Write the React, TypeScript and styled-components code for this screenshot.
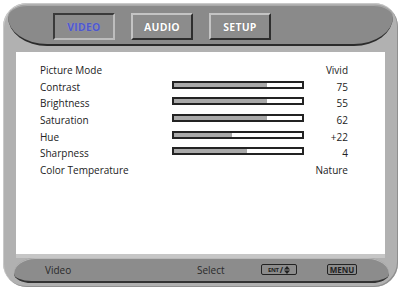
import React from 'react';
import styled, { createGlobalStyle } from 'styled-components';

const GlobalStyle = createGlobalStyle`
  html, body {
    margin: 0;
    padding: 0;
    background: #ffffff;
  }
  body {
    font-family: 'Open Sans', 'Liberation Sans', sans-serif;
  }
`;

const Frame = styled.div`
  margin: 3px;
  width: 395px;
  height: 284px;
  box-sizing: border-box;
  padding: 2px 5px 3px;
  border-radius: 24px;
  background: #b1b1b1;
  box-shadow: inset 1px 1px 0 #c9c9c9, inset -1px -1px 0 #8f8f8f;
  display: flex;
  flex-direction: column;
`;

const TopBand = styled.div`
  height: 41px;
  box-sizing: border-box;
  background: #8a8a8a;
  border-radius: 20px 20px 40px 40px / 12px 12px 30px 30px;
  border-bottom: 2px solid #2b2b2b;
  box-shadow: inset 0 1px 0 #a9a9a9;
  padding: 8px 0 0 45px;
  display: flex;
  gap: 16px;
`;

const Tab = styled.div<{ $active?: boolean }>`
  width: 62px;
  height: 27px;
  box-sizing: border-box;
  display: flex;
  align-items: center;
  justify-content: center;
  background: #8c8c8c;
  font-size: 10.5px;
  font-weight: 700;
  letter-spacing: 0.2px;
  border: 2px solid;
  border-color: ${(p) => (p.$active ? '#3a3a3a #bdbdbd #bdbdbd #3a3a3a' : '#c4c4c4 #2e2e2e #2e2e2e #c4c4c4')};
  color: ${(p) => (p.$active ? '#5058c4' : '#ffffff')};
  text-shadow: ${(p) => (p.$active ? '0 0 1px #9aa0ff' : '0 0 1px #666')};
`;

const Panel = styled.div`
  margin: 6px 8px 0;
  height: 202px;
  background: #ffffff;
  box-sizing: border-box;
  padding: 10px 37px 0 24px;
  color: #222;
  font-size: 10px;
`;

const Row = styled.div`
  height: 16.6px;
  display: grid;
  grid-template-columns: 132px 132px 44px;
  align-items: center;
`;

const Label = styled.span`
  white-space: nowrap;
`;

const Value = styled.span`
  grid-column: 3;
  text-align: right;
  white-space: nowrap;
`;

const Bar = styled.div`
  height: 8px;
  box-sizing: border-box;
  border: 2px solid #232323;
  background: #ffffff;
  margin-top: -4px;
`;

const Fill = styled.div`
  height: 100%;
  background: #a9a9a9;
`;

const Strip = styled.div`
  height: 4px;
  margin: 0 8px;
  background: #c6c6c6;
`;

const Footer = styled.div`
  height: 25px;
  margin: 0 4px 0 6px;
  box-sizing: border-box;
  background: #8c8c8c;
  border-radius: 22px 22px 18px 18px / 16px 16px 10px 10px;
  border-bottom: 2px solid #333;
  box-shadow: inset 0 1px 0 #b9b9b9;
  padding-left: 31px;
  display: grid;
  grid-template-columns: 152px 64px 66px auto;
  align-items: center;
  font-size: 10px;
  color: #2a2a2a;
`;

const KeyBox = styled.span<{ $w: number }>`
  width: ${(p) => p.$w}px;
  height: 11px;
  box-sizing: border-box;
  border: 1px solid #222;
  border-radius: 2px;
  display: flex;
  align-items: center;
  justify-content: center;
  gap: 1px;
  font-size: 8px;
  font-weight: 700;
  color: #222;
  line-height: 1;
`;

const Tiny = styled.span`
  font-size: 6px;
  letter-spacing: -0.3px;
`;

const rows = [
  { label: 'Picture Mode', value: 'Vivid' },
  { label: 'Contrast', value: '75', fill: 73 },
  { label: 'Brightness', value: '55', fill: 73 },
  { label: 'Saturation', value: '62', fill: 73 },
  { label: 'Hue', value: '+22', fill: 45 },
  { label: 'Sharpness', value: '4', fill: 57 },
  { label: 'Color Temperature', value: 'Nature' },
];

const UpDown = () => (
  <svg width="6" height="8" viewBox="0 0 6 8">
    <path d="M3 0 L6 3.4 H0 Z M3 8 L0 4.6 H6 Z" fill="#222" />
  </svg>
);

const App = () => (
  <>
    <GlobalStyle />
    <Frame>
      <TopBand>
        <Tab $active>VIDEO</Tab>
        <Tab>AUDIO</Tab>
        <Tab>SETUP</Tab>
      </TopBand>
      <Panel>
        {rows.map((r) => (
          <Row key={r.label}>
            <Label>{r.label}</Label>
            {r.fill !== undefined && (
              <Bar>
                <Fill style={{ width: `${r.fill}%` }} />
              </Bar>
            )}
            <Value>{r.value}</Value>
          </Row>
        ))}
      </Panel>
      <Strip />
      <Footer>
        <span>Video</span>
        <span>Select</span>
        <span>
          <KeyBox $w={36}>
            <Tiny>ENT</Tiny>/ <UpDown />
          </KeyBox>
        </span>
        <span>
          <KeyBox $w={30}>MENU</KeyBox>
        </span>
      </Footer>
    </Frame>
  </>
);

export default App;
